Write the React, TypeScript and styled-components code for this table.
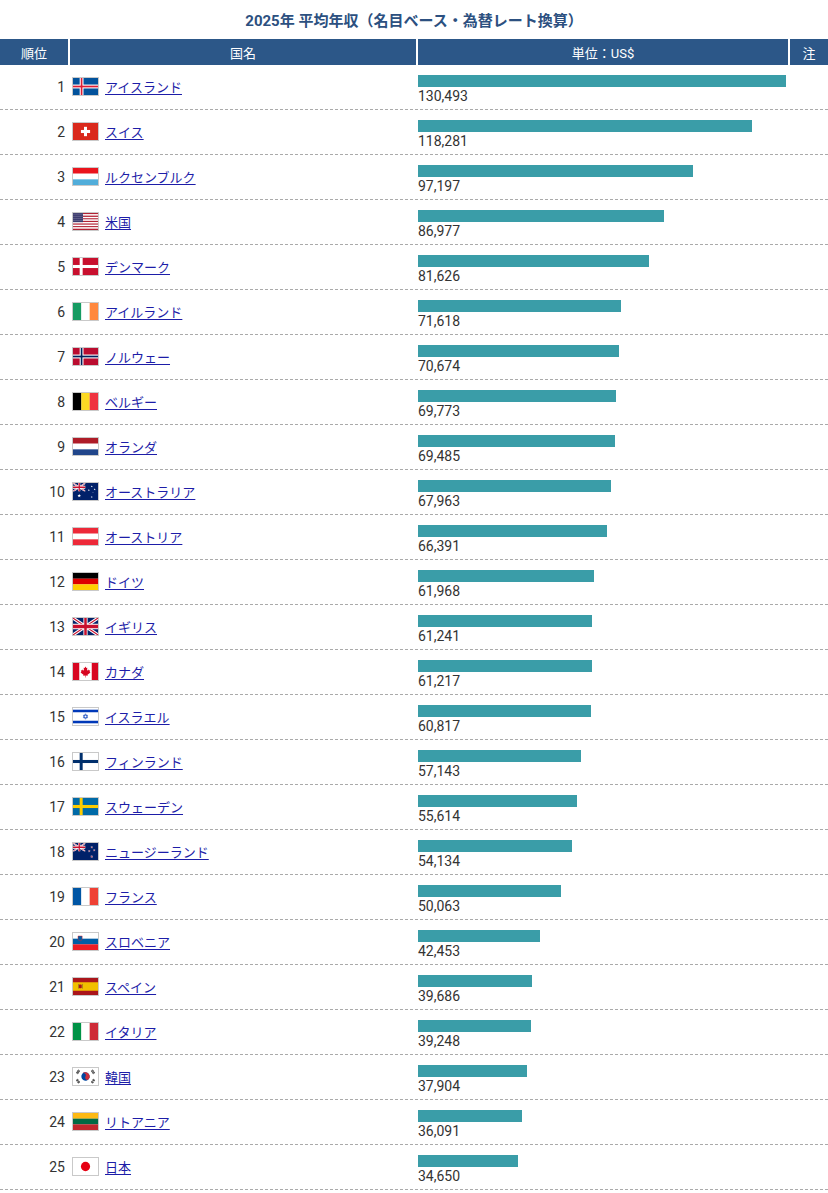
import React from 'react';
import styled, { createGlobalStyle } from 'styled-components';

const GlobalStyle = createGlobalStyle`
  html, body {
    margin: 0;
    padding: 0;
    background: #fff;
  }
  body {
    font-family: Roboto, "Noto Sans CJK JP", sans-serif;
    color: #333;
  }
`;

const COLS = '68px 346px 370px 38px';

const UnionJack = ({ x = 0, y = 0, w = 15, h = 10 }: { x?: number; y?: number; w?: number; h?: number }) => (
  <svg x={x} y={y} width={w} height={h} viewBox="0 0 60 30" preserveAspectRatio="none">
    <rect width="60" height="30" fill="#012169" />
    <path d="M0,0 L60,30 M60,0 L0,30" stroke="#fff" strokeWidth="6" />
    <path d="M0,0 L60,30 M60,0 L0,30" stroke="#C8102E" strokeWidth="2" />
    <path d="M30,0 V30 M0,15 H60" stroke="#fff" strokeWidth="10" />
    <path d="M30,0 V30 M0,15 H60" stroke="#C8102E" strokeWidth="6" />
  </svg>
);

const Star = ({ cx, cy, r, fill, stroke }: { cx: number; cy: number; r: number; fill: string; stroke?: string }) => {
  const pts: string[] = [];
  for (let i = 0; i < 10; i++) {
    const a = -Math.PI / 2 + (i * Math.PI) / 5;
    const rr = i % 2 === 0 ? r : r * 0.45;
    pts.push(`${cx + rr * Math.cos(a)},${cy + rr * Math.sin(a)}`);
  }
  return <polygon points={pts.join(' ')} fill={fill} stroke={stroke} strokeWidth={stroke ? 0.4 : 0} />;
};

const hStripes = (colors: string[]) =>
  colors.map((c, i) => (
    <rect key={i} x="0" y={(20 / colors.length) * i} width="30" height={20 / colors.length + 0.1} fill={c} />
  ));

const vStripes = (colors: string[]) =>
  colors.map((c, i) => <rect key={i} x={10 * i} y="0" width="10.1" height="20" fill={c} />);

const nordic = (bg: string, outer: string, inner?: string) => (
  <>
    <rect width="30" height="20" fill={bg} />
    <rect x="8" y="0" width={inner ? 4.6 : 3.6} height="20" fill={outer} />
    <rect x="0" y={inner ? 7.7 : 8.2} width="30" height={inner ? 4.6 : 3.6} fill={outer} />
    {inner && (
      <>
        <rect x="9.3" y="0" width="2" height="20" fill={inner} />
        <rect x="0" y="9" width="30" height="2" fill={inner} />
      </>
    )}
  </>
);

const flags: Record<string, React.ReactNode> = {
  is: nordic('#02529C', '#fff', '#DC1E35'),
  ch: (
    <>
      <rect width="30" height="20" fill="#DA291C" />
      <rect x="13.2" y="4.5" width="3.6" height="11" fill="#fff" />
      <rect x="9.5" y="8.2" width="11" height="3.6" fill="#fff" />
    </>
  ),
  lu: hStripes(['#EA141D', '#fff', '#51ADDA']),
  us: (
    <>
      {Array.from({ length: 13 }).map((_, i) => (
        <rect key={i} x="0" y={(20 / 13) * i} width="30" height={20 / 13 + 0.05} fill={i % 2 ? '#fff' : '#B22234'} />
      ))}
      <rect width="12" height={(20 / 13) * 7} fill="#3C3B6E" />
      {Array.from({ length: 20 }).map((_, i) => (
        <circle key={i} cx={1.2 + (i % 5) * 2.4} cy={1.2 + Math.floor(i / 5) * 2.5} r="0.45" fill="#fff" />
      ))}
    </>
  ),
  dk: nordic('#C8102E', '#fff'),
  ie: vStripes(['#169B62', '#fff', '#FF883E']),
  no: nordic('#BA0C2F', '#fff', '#00205B'),
  be: vStripes(['#000', '#FDDA24', '#EF3340']),
  nl: hStripes(['#AE1C28', '#fff', '#21468B']),
  au: (
    <>
      <rect width="30" height="20" fill="#012169" />
      <UnionJack w={15} h={10} />
      <Star cx={7.5} cy={15} r={2.2} fill="#fff" />
      <Star cx={22.5} cy={16.5} r={1.2} fill="#fff" />
      <Star cx={22.5} cy={4} r={1.2} fill="#fff" />
      <Star cx={19} cy={8.5} r={1.2} fill="#fff" />
      <Star cx={26} cy={7.5} r={1.2} fill="#fff" />
      <Star cx={24} cy={11} r={0.7} fill="#fff" />
    </>
  ),
  at: hStripes(['#ED2939', '#fff', '#ED2939']),
  de: hStripes(['#000', '#DD0000', '#FFCE00']),
  gb: <UnionJack w={30} h={20} />,
  ca: (
    <>
      <rect width="30" height="20" fill="#fff" />
      <rect width="7.5" height="20" fill="#D80621" />
      <rect x="22.5" width="7.5" height="20" fill="#D80621" />
      <path
        d="M15,4 L16,6 L17.2,5.5 L16.8,9 L18.6,7.6 L19,8.8 L20.6,8.4 L20,10.6 L21,11.2 L17.4,13.8 L17.8,15 L15.3,14.6 L15.3,17 L14.7,17 L14.7,14.6 L12.2,15 L12.6,13.8 L9,11.2 L10,10.6 L9.4,8.4 L11,8.8 L11.4,7.6 L13.2,9 L12.8,5.5 L14,6 Z"
        fill="#D80621"
      />
    </>
  ),
  il: (
    <>
      <rect width="30" height="20" fill="#fff" />
      <rect x="0" y="2" width="30" height="3" fill="#0038B8" />
      <rect x="0" y="15" width="30" height="3" fill="#0038B8" />
      <polygon points="15,6.8 17.6,11.4 12.4,11.4" fill="none" stroke="#0038B8" strokeWidth="0.7" />
      <polygon points="15,13.2 17.6,8.6 12.4,8.6" fill="none" stroke="#0038B8" strokeWidth="0.7" />
    </>
  ),
  fi: nordic('#fff', '#002F6C'),
  se: nordic('#006AA7', '#FECC00'),
  nz: (
    <>
      <rect width="30" height="20" fill="#012169" />
      <UnionJack w={15} h={10} />
      <Star cx={22.5} cy={16} r={1.4} fill="#C8102E" stroke="#fff" />
      <Star cx={22.5} cy={5} r={1.2} fill="#C8102E" stroke="#fff" />
      <Star cx={19.5} cy={9.5} r={1.2} fill="#C8102E" stroke="#fff" />
      <Star cx={25.5} cy={8.5} r={1.1} fill="#C8102E" stroke="#fff" />
    </>
  ),
  fr: vStripes(['#0055A4', '#fff', '#EF4135']),
  si: (
    <>
      {hStripes(['#fff', '#005DA4', '#ED1C24'])}
      <path d="M6,3.5 H11 V8 Q8.5,10.5 6,8 Z" fill="#005DA4" stroke="#ED1C24" strokeWidth="0.5" />
    </>
  ),
  es: (
    <>
      <rect width="30" height="20" fill="#AA151B" />
      <rect x="0" y="5" width="30" height="10" fill="#F1BF00" />
      <rect x="7" y="7.5" width="3.5" height="4.5" rx="0.8" fill="#AA151B" />
      <rect x="6" y="7" width="0.8" height="5.5" fill="#8B6A2E" />
      <rect x="10.8" y="7" width="0.8" height="5.5" fill="#8B6A2E" />
    </>
  ),
  it: vStripes(['#009246', '#fff', '#CE2B37']),
  kr: (
    <>
      <rect width="30" height="20" fill="#fff" />
      <g transform="rotate(33.7 15 10)">
        <circle cx="15" cy="10" r="5" fill="#0047A0" />
        <path d="M10,10 A5,5 0 0 1 20,10 A2.5,2.5 0 0 1 15,10 A2.5,2.5 0 0 0 10,10 Z" fill="#CD2E3A" />
      </g>
      <g fill="#000">
        <g transform="rotate(-56.3 6 4.5)">
          <rect x="3.5" y="3.2" width="5" height="0.7" />
          <rect x="3.5" y="4.2" width="5" height="0.7" />
          <rect x="3.5" y="5.2" width="5" height="0.7" />
        </g>
        <g transform="rotate(56.3 24 4.5)">
          <rect x="21.5" y="3.2" width="5" height="0.7" />
          <rect x="21.5" y="4.2" width="2.2" height="0.7" />
          <rect x="24.3" y="4.2" width="2.2" height="0.7" />
          <rect x="21.5" y="5.2" width="5" height="0.7" />
        </g>
        <g transform="rotate(56.3 6 15.5)">
          <rect x="3.5" y="14.2" width="2.2" height="0.7" />
          <rect x="6.3" y="14.2" width="2.2" height="0.7" />
          <rect x="3.5" y="15.2" width="5" height="0.7" />
          <rect x="3.5" y="16.2" width="2.2" height="0.7" />
          <rect x="6.3" y="16.2" width="2.2" height="0.7" />
        </g>
        <g transform="rotate(-56.3 24 15.5)">
          <rect x="21.5" y="14.2" width="2.2" height="0.7" />
          <rect x="24.3" y="14.2" width="2.2" height="0.7" />
          <rect x="21.5" y="15.2" width="2.2" height="0.7" />
          <rect x="24.3" y="15.2" width="2.2" height="0.7" />
          <rect x="21.5" y="16.2" width="2.2" height="0.7" />
          <rect x="24.3" y="16.2" width="2.2" height="0.7" />
        </g>
      </g>
    </>
  ),
  lt: hStripes(['#FDB913', '#006A44', '#C1272D']),
  jp: (
    <>
      <rect width="30" height="20" fill="#fff" />
      <circle cx="15" cy="10" r="5.5" fill="#E60012" />
    </>
  ),
};

const rows: [string, string, number][] = [
  ['is', 'アイスランド', 130493],
  ['ch', 'スイス', 118281],
  ['lu', 'ルクセンブルク', 97197],
  ['us', '米国', 86977],
  ['dk', 'デンマーク', 81626],
  ['ie', 'アイルランド', 71618],
  ['no', 'ノルウェー', 70674],
  ['be', 'ベルギー', 69773],
  ['nl', 'オランダ', 69485],
  ['au', 'オーストラリア', 67963],
  ['at', 'オーストリア', 66391],
  ['de', 'ドイツ', 61968],
  ['gb', 'イギリス', 61241],
  ['ca', 'カナダ', 61217],
  ['il', 'イスラエル', 60817],
  ['fi', 'フィンランド', 57143],
  ['se', 'スウェーデン', 55614],
  ['nz', 'ニュージーランド', 54134],
  ['fr', 'フランス', 50063],
  ['si', 'スロベニア', 42453],
  ['es', 'スペイン', 39686],
  ['it', 'イタリア', 39248],
  ['kr', '韓国', 37904],
  ['lt', 'リトアニア', 36091],
  ['jp', '日本', 34650],
];

const Flag = ({ code }: { code: string }) => (
  <FlagFrame>
    <svg width="25" height="17" viewBox="0 0 30 20" preserveAspectRatio="none">
      {flags[code]}
    </svg>
  </FlagFrame>
);

const App = () => {
  return (
    <Page>
      <GlobalStyle />
      <Title>2025年 平均年収（名目ベース・為替レート換算）</Title>
      <HeaderRow>
        <HeadCell>順位</HeadCell>
        <HeadCell>国名</HeadCell>
        <HeadCell>単位：US$</HeadCell>
        <HeadCell>注</HeadCell>
      </HeaderRow>
      {rows.map(([code, name, value], i) => (
        <Row key={code}>
          <RankCell>{i + 1}</RankCell>
          <NameCell>
            <Flag code={code} />
            <CountryLink href="#">{name}</CountryLink>
          </NameCell>
          <ValueCell>
            <Bar style={{ width: Math.round(3 + value * 0.002797) }} />
            <Amount>{value.toLocaleString('en-US')}</Amount>
          </ValueCell>
          <NoteCell />
        </Row>
      ))}
    </Page>
  );
};

export default App;

const Page = styled.div`
  width: 828px;
`;

const Title = styled.h1`
  margin: 0;
  height: 39px;
  display: flex;
  align-items: center;
  justify-content: center;
  padding-bottom: 1px;
  box-sizing: border-box;
  font-family: Roboto, "Noto Sans CJK JP", sans-serif;
  font-size: 15px;
  font-weight: bold;
  color: #2c5080;
`;

const HeaderRow = styled.div`
  display: grid;
  grid-template-columns: ${COLS};
  column-gap: 2px;
  height: 26px;
`;

const HeadCell = styled.div`
  background: #2c5788;
  color: #fff;
  font-family: Roboto, "Noto Sans CJK JP", sans-serif;
  font-size: 13px;
  display: flex;
  align-items: center;
  justify-content: center;
`;

const Row = styled.div`
  display: grid;
  grid-template-columns: ${COLS};
  column-gap: 2px;
  height: 45px;
  box-sizing: border-box;
  border-bottom: 1px dashed #aaa;
`;

const RankCell = styled.div`
  display: flex;
  align-items: center;
  justify-content: flex-end;
  padding-right: 3px;
  font-size: 14px;
  color: #333;
`;

const NameCell = styled.div`
  display: flex;
  align-items: center;
  gap: 6px;
  padding-left: 2px;
  padding-bottom: 1px;
`;

const FlagFrame = styled.span`
  display: inline-flex;
  border: 1px solid #c9c9c9;
  line-height: 0;
  svg {
    display: block;
  }
`;

const CountryLink = styled.a`
  font-family: "Noto Sans CJK JP", sans-serif;
  font-size: 13px;
  color: #1d1da8;
  text-decoration: underline;
  text-underline-offset: 2px;
`;

const ValueCell = styled.div`
  display: flex;
  flex-direction: column;
  align-items: flex-start;
  padding-top: 10px;
`;

const Bar = styled.div`
  height: 12px;
  background: #3a9da8;
`;

const Amount = styled.div`
  font-size: 14px;
  line-height: 18px;
  color: #333;
`;

const NoteCell = styled.div``;
